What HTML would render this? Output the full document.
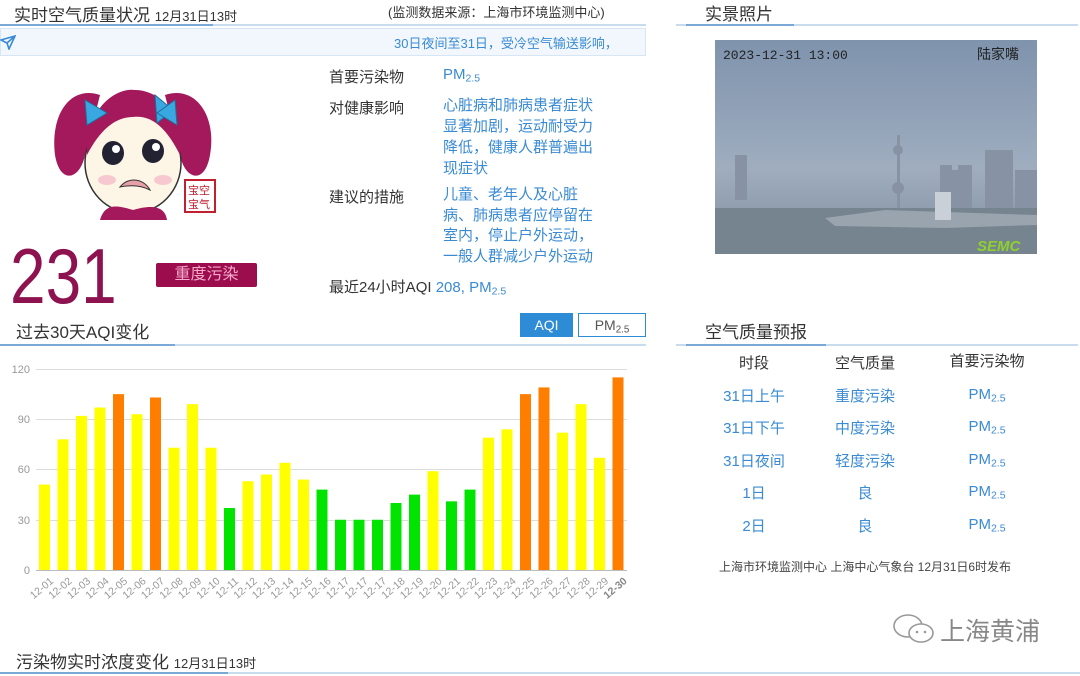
<!DOCTYPE html>
<html><head><meta charset="utf-8"><style>
*{margin:0;padding:0;box-sizing:border-box}
body{width:1080px;height:676px;background:#fff;font-family:"Liberation Sans","Noto Sans CJK SC",sans-serif;position:relative;overflow:hidden;color:#333}
.a{position:absolute;white-space:nowrap}
.blue{color:#3a8bd3}
sub{font-size:0.7em;vertical-align:-0.25em;line-height:0}
</style></head><body>

<div class="a" style="left:14px;top:1px;font-size:17px;color:#333">实时空气质量状况 <span style="font-size:13px">12月31日13时</span></div>
<div class="a" style="left:388px;top:2px;font-size:13px;color:#333">(监测数据来源：上海市环境监测中心)</div>
<div class="a" style="left:0;top:24px;width:646px;height:2px;background:#c9dcee"></div>
<div class="a" style="left:0;top:24px;width:213px;height:2px;background:#7aa9d8"></div>
<div class="a" style="left:0;top:28px;width:646px;height:28px;background:#f1f7fd;border:1px solid #d6e6f5"></div>
<svg class="a" style="left:0;top:34px" width="16" height="16" viewBox="0 0 16 16"><path d="M1 6 L15 2 L9 15 L7 9 Z M7 9 L15 2" fill="none" stroke="#3a8bd3" stroke-width="1.6"/></svg>
<div class="a blue" style="left:394px;top:33px;font-size:13px">30日夜间至31日，受冷空气输送影响，</div>

<svg class="a" style="left:45px;top:85px" width="180" height="135" viewBox="0 0 180 135">
<path d="M55 10 C25 0 5 30 10 70 C15 100 35 95 40 70 Z" fill="#a3195b"/>
<path d="M120 10 C150 0 172 30 165 70 C160 100 140 95 135 70 Z" fill="#a3195b"/>
<ellipse cx="88" cy="78" rx="48" ry="50" fill="#fdf6e6" stroke="#333" stroke-width="1.5"/>
<path d="M42 70 C40 25 70 2 90 5 C115 5 140 30 135 70 C120 40 105 30 88 32 C70 32 55 45 42 70Z" fill="#a3195b"/>
<path d="M40 15 L62 28 L42 40 Z" fill="#3aa8e0" stroke="#1d6fa0"/>
<path d="M110 10 L128 25 L112 38 Z" fill="#3aa8e0" stroke="#1d6fa0"/>
<path d="M130 15 L112 28 L132 40 Z" fill="#3aa8e0" stroke="#1d6fa0"/>
<ellipse cx="68" cy="68" rx="11" ry="12" fill="#223" /><ellipse cx="108" cy="66" rx="11" ry="12" fill="#223"/>
<circle cx="71" cy="64" r="4" fill="#fff"/><circle cx="111" cy="62" r="4" fill="#fff"/>
<ellipse cx="62" cy="95" rx="9" ry="5" fill="#f7c8d0"/><ellipse cx="118" cy="95" rx="9" ry="5" fill="#f7c8d0"/>
<path d="M75 102 C85 90 100 95 105 105 C95 100 85 100 75 102Z" fill="#e8a0a8" stroke="#333"/>
<path d="M55 135 C60 118 72 120 88 125 C105 120 120 120 122 135Z" fill="#a3195b"/>
<rect x="140" y="95" width="30" height="32" fill="#fff" stroke="#c02030" stroke-width="2"/>
<text x="143" y="109" font-size="11" fill="#c02030">宝空</text><text x="143" y="123" font-size="11" fill="#c02030">宝气</text>
</svg>

<div class="a" style="left:10px;top:236px;font-size:78px;line-height:80px;color:#8e1150;transform:scaleX(0.82);transform-origin:0 0">231</div>
<div class="a" style="left:156px;top:263px;width:101px;height:24px;background:#9c0d4e;border-radius:2px;color:#f4a9c9;font-size:16px;text-align:center;line-height:24px">重度污染</div>

<div class="a" style="left:329px;top:66px;font-size:15px">首要污染物</div>
<div class="a blue" style="left:443px;top:66px;font-size:15px">PM<sub>2.5</sub></div>
<div class="a" style="left:329px;top:97px;font-size:15px">对健康影响</div>
<div class="a blue" style="left:443px;top:95px;font-size:15px;line-height:21px;white-space:normal;width:162px">心脏病和肺病患者症状显著加剧，运动耐受力降低，健康人群普遍出现症状</div>
<div class="a" style="left:329px;top:186px;font-size:15px">建议的措施</div>
<div class="a blue" style="left:443px;top:185px;font-size:15px;line-height:20.5px;white-space:normal;width:162px">儿童、老年人及心脏病、肺病患者应停留在室内，停止户外运动，一般人群减少户外运动</div>
<div class="a" style="left:329px;top:276px;font-size:15px">最近24小时AQI <span class="blue">208, PM<sub>2.5</sub></span></div>

<div class="a" style="left:16px;top:318px;font-size:17px">过去30天AQI变化</div>
<div class="a" style="left:520px;top:313px;width:53px;height:24px;background:#2e8cd6;color:#fff;font-size:14px;text-align:center;line-height:24px">AQI</div>
<div class="a" style="left:578px;top:313px;width:68px;height:24px;border:1px solid #2e8cd6;color:#555;font-size:14px;text-align:center;line-height:22px">PM<sub>2.5</sub></div>
<div class="a" style="left:0;top:344px;width:646px;height:2px;background:#c9dcee"></div>
<div class="a" style="left:0;top:344px;width:175px;height:2px;background:#7aa9d8"></div>

<svg class="a" style="left:0;top:355px" width="650" height="260" viewBox="0 355 650 260" font-family="Liberation Sans, sans-serif">
<g stroke="#ddd" stroke-width="1">
<line x1="36" y1="369.5" x2="627" y2="369.5"/><line x1="36" y1="419.5" x2="627" y2="419.5"/><line x1="36" y1="469.5" x2="627" y2="469.5"/><line x1="36" y1="520.5" x2="627" y2="520.5"/>
</g>
<line x1="36" y1="570.5" x2="627" y2="570.5" stroke="#bbb"/>
<g font-size="11" fill="#999" text-anchor="end">
<text x="30" y="373">120</text><text x="30" y="423">90</text><text x="30" y="473">60</text><text x="30" y="524">30</text><text x="30" y="574">0</text>
</g>
<g id="bars"></g>
<g id="labels" font-size="10.5" fill="#999"></g>
</svg>

<div class="a" style="left:16px;top:648px;font-size:17px">污染物实时浓度变化 <span style="font-size:13px">12月31日13时</span></div>
<div class="a" style="left:0;top:672px;width:1080px;height:2px;background:#c9dcee"></div>
<div class="a" style="left:0;top:672px;width:228px;height:2px;background:#7aa9d8"></div>

<div class="a" style="left:705px;top:0px;font-size:17px">实景照片</div>
<div class="a" style="left:676px;top:24px;width:402px;height:2px;background:#c9dcee"></div>
<div class="a" style="left:686px;top:24px;width:108px;height:2px;background:#7aa9d8"></div>
<svg class="a" style="left:715px;top:40px" width="322" height="214" viewBox="0 0 322 214">
<defs><linearGradient id="sky" x1="0" y1="0" x2="0" y2="1"><stop offset="0" stop-color="#7f93ad"/><stop offset="0.6" stop-color="#9fadbf"/><stop offset="1" stop-color="#7f8e9e"/></linearGradient></defs>
<rect width="322" height="214" fill="url(#sky)"/>
<g fill="#8793a4">
<rect x="20" y="115" width="12" height="45"/><rect x="270" y="110" width="28" height="70"/><rect x="300" y="130" width="22" height="50"/>
<rect x="225" y="125" width="12" height="50"/><rect x="235" y="130" width="10" height="50"/><rect x="243" y="125" width="14" height="60"/>
<rect x="182" y="95" width="3" height="80"/><circle cx="183" cy="110" r="5"/><circle cx="183" cy="148" r="6"/>
</g>
<rect x="0" y="168" width="322" height="46" fill="#76848f"/>
<path d="M110 178 L170 170 L230 172 L322 175 L322 185 L230 188 L120 186 Z" fill="#9aa4ae"/>
<rect x="220" y="152" width="16" height="28" fill="#c9d0d8"/>
<text x="8" y="19" font-size="13" fill="#222" font-family="Liberation Mono, monospace">2023-12-31 13:00</text>
<text x="262" y="19" font-size="14" fill="#222" font-family="Noto Sans CJK SC, sans-serif">陆家嘴</text>
<text x="262" y="211" font-size="15" font-style="italic" font-weight="bold" fill="#8ed12d">SEMC</text>
</svg>

<div class="a" style="left:705px;top:318px;font-size:17px">空气质量预报</div>
<div class="a" style="left:676px;top:344px;width:402px;height:2px;background:#c9dcee"></div>
<div class="a" style="left:686px;top:344px;width:140px;height:2px;background:#7aa9d8"></div>
<div class="a" style="left:694px;top:348px;width:120px;text-align:center;font-size:15px;line-height:32.5px">时段<br><span class="blue">31日上午<br>31日下午<br>31日夜间<br>1日<br>2日</span></div>
<div class="a" style="left:805px;top:348px;width:120px;text-align:center;font-size:15px;line-height:32.5px">空气质量<br><span class="blue">重度污染<br>中度污染<br>轻度污染<br>良<br>良</span></div>
<div class="a" style="left:927px;top:346px;width:120px;text-align:center;font-size:15px;line-height:32.5px">首要污染物<br><span class="blue">PM<sub>2.5</sub><br>PM<sub>2.5</sub><br>PM<sub>2.5</sub><br>PM<sub>2.5</sub><br>PM<sub>2.5</sub></span></div>
<div class="a" style="left:719px;top:558px;font-size:12px;color:#444">上海市环境监测中心 上海中心气象台 12月31日6时发布</div>

<svg class="a" style="left:892px;top:612px" width="44" height="34" viewBox="0 0 44 34"><ellipse cx="16" cy="14" rx="14" ry="11" fill="none" stroke="#999" stroke-width="1.6"/><ellipse cx="29" cy="21" rx="12" ry="9" fill="#fff" stroke="#999" stroke-width="1.6"/><circle cx="25" cy="20" r="1.3" fill="#999"/><circle cx="33" cy="20" r="1.3" fill="#999"/></svg>
<div class="a" style="left:940px;top:612px;font-size:25px;color:#888">上海黄浦</div>

<script>
var v=[51,78,92,97,105,93,103,73,99,73,37,53,57,64,54,48,30,30,30,40,45,59,41,48,79,84,105,109,82,99,67,115];
var l=["01","02","03","04","05","06","07","08","09","10","11","12","13","14","15","16","17","17","17","18","19","20","21","22","23","24","25","26","27","28","29","30"];
var b="",t="";
for(var i=0;i<32;i++){var x=39+i*18.5,h=v[i]*1.675,c=v[i]<=50?"#00e400":(v[i]<=100?"#ffff00":"#ff7e00");
b+='<rect x="'+x+'" y="'+(570-h)+'" width="11" height="'+h+'" fill="'+c+'"/>';
var cx=x+10;t+='<text transform="translate('+cx+',576) rotate(-40)" text-anchor="end" dy="8"'+(i==31?' font-weight="bold" fill="#888"':'')+'>12-'+l[i]+'</text>';}
document.getElementById("bars").innerHTML=b;document.getElementById("labels").innerHTML=t;
</script>
</body></html>
